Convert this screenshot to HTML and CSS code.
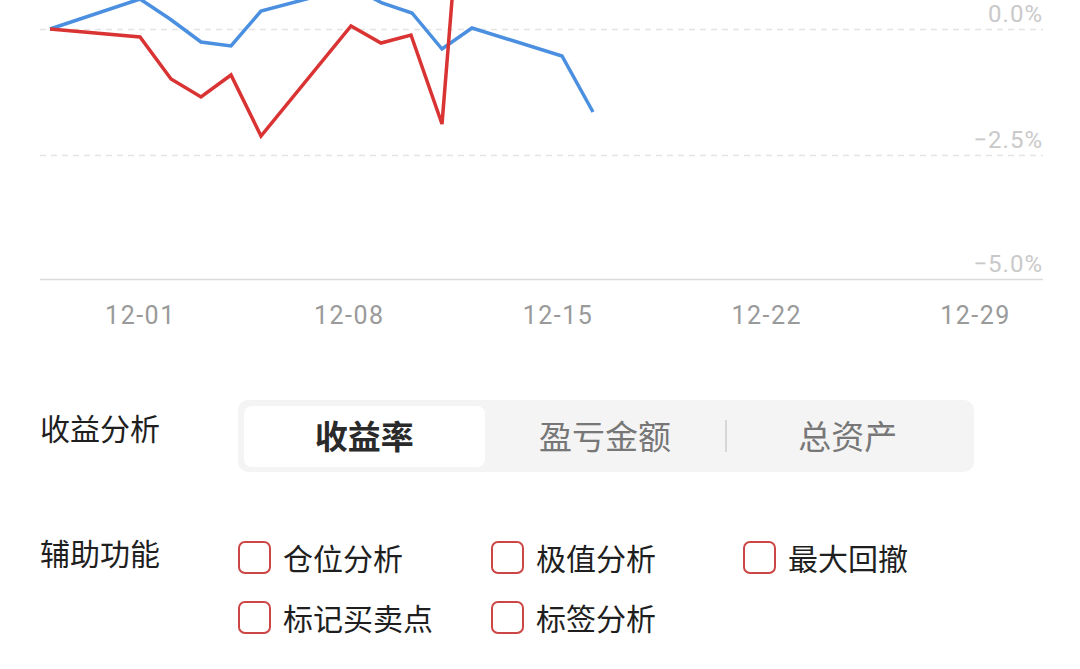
FILE: index.html
```html
<!DOCTYPE html>
<html lang="zh">
<head>
<meta charset="utf-8">
<title>收益分析</title>
<link rel="stylesheet" href="styles.css">
</head>
<body>
<div class="page">
  <svg class="chart" width="1080" height="290" viewBox="0 0 1080 290">
    <line class="grid" x1="40" y1="29.5" x2="1043" y2="29.5"/>
    <line class="grid" x1="40" y1="155.5" x2="1043" y2="155.5"/>
    <line class="axis" x1="40" y1="279.5" x2="1043" y2="279.5"/>
    <polyline class="line blue" points="50,29 140,-1 170,19 201,42 231,46 261,11 352,-13 382,3 412,13 442,49 472,28 562,56 593,112"/>
    <polyline class="line red" points="50,29 140,37 171,79 201,97 231,75 261,136 351,26 381,43 411,35 442,124 472,-248"/>
    <text class="ylabel" x="1043" y="21.5">0.0%</text>
    <text class="ylabel" x="1043" y="147.5">−2.5%</text>
    <text class="ylabel" x="1043" y="271.5">−5.0%</text>
  </svg>
  <div class="xaxis">
    <span>12-01</span><span>12-08</span><span>12-15</span><span>12-22</span><span>12-29</span>
  </div>

  <div class="row analysis">
    <div class="label">收益分析</div>
    <div class="segment">
      <div class="tab active">收益率</div>
      <div class="tab">盈亏金额</div>
      <div class="divider"></div>
      <div class="tab">总资产</div>
    </div>
  </div>

  <div class="row aux">
    <div class="label">辅助功能</div>
    <div class="checks">
      <div class="check"><span class="box"></span>仓位分析</div>
      <div class="check"><span class="box"></span>极值分析</div>
      <div class="check"><span class="box"></span>最大回撤</div>
      <div class="check"><span class="box"></span>标记买卖点</div>
      <div class="check"><span class="box"></span>标签分析</div>
    </div>
  </div>
</div>
</body>
</html>
```
FILE: styles.css
```css
html, body {
  margin: 0;
  padding: 0;
  background: #ffffff;
}
body {
  font-family: "Noto Sans CJK SC", "Noto Sans", sans-serif;
  color: #1f1f1f;
  width: 1080px;
  height: 669px;
  overflow: hidden;
}
.chart {
  display: block;
  overflow: hidden;
}
.grid {
  stroke: #e4e4e4;
  stroke-width: 1.5;
  stroke-dasharray: 6 5;
}
.axis {
  stroke: #dadada;
  stroke-width: 1.5;
}
.line {
  fill: none;
  stroke-width: 3.5;
  stroke-linejoin: miter;
  stroke-linecap: butt;
}
.blue { stroke: #4a8fe0; }
.red { stroke: #d93333; }
.ylabel {
  font-family: Roboto, "Noto Sans", sans-serif;
  font-size: 24px;
  letter-spacing: 1px;
  fill: #c9c9c9;
  text-anchor: end;
}
.xaxis {
  display: flex;
  padding-left: 36px;
  height: 52px;
  line-height: 52px;
  font-family: Roboto, "Noto Sans", sans-serif;
  font-size: 25px;
  letter-spacing: 1.5px;
  color: #9a9a9a;
}
.xaxis span {
  width: 211px;
  text-align: center;
}
.row {
  display: flex;
  padding-left: 40px;
}
.label {
  width: 198px;
  flex: none;
  font-size: 30px;
  color: #1f1f1f;
}
.analysis {
  margin-top: 58px;
}
.analysis .label {
  margin-top: 7px;
  line-height: 40px;
}
.segment {
  width: 736px;
  height: 72px;
  box-sizing: border-box;
  padding: 6px;
  background: #f4f4f4;
  border-radius: 10px;
  display: flex;
  align-items: center;
}
.tab {
  flex: 1;
  height: 61px;
  line-height: 59px;
  text-align: center;
  font-size: 33px;
  color: #777777;
  border-radius: 8px;
}
.tab.active {
  background: #ffffff;
  color: #2a2a2a;
  font-weight: 700;
}
.divider {
  width: 2px;
  height: 32px;
  background: #d6d6d6;
}
.aux {
  margin-top: 69px;
}
.aux .label {
  line-height: 33px;
  margin-top: -5px;
}
.checks {
  display: grid;
  grid-template-columns: 253px 252px auto;
  row-gap: 27px;
}
.check {
  display: flex;
  align-items: center;
  gap: 12px;
  height: 33px;
  line-height: 33px;
  font-size: 30px;
  color: #1f1f1f;
}
.check-text {
  display: block;
}
.box {
  width: 33px;
  height: 33px;
  box-sizing: border-box;
  border: 2px solid #cc4646;
  border-radius: 7px;
  flex: none;
}
```
